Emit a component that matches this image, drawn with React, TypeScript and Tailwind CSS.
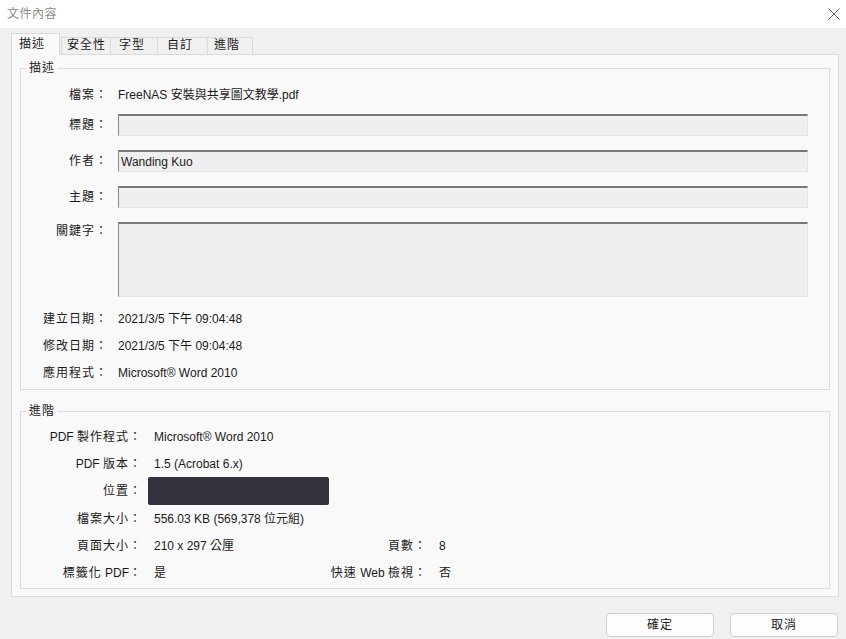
import React from "react";

const font = { fontFamily: '"Liberation Sans", "Noto Sans CJK TC", sans-serif' };

function Field({ label, value, tall }: { label: string; value?: string; tall?: boolean }) {
  return (
    <div className={`flex ${tall ? "items-start h-[75px]" : "items-center h-[22px]"}`}>
      <div className={`w-[87px] text-right tracking-[1px] ${tall ? "pt-[1px]" : ""}`}>{label}</div>
      <div
        className={`ml-[10px] flex-1 mr-[21px] bg-[#efefef] border-t-[2px] border-l border-t-[#7a7a7a] border-l-[#8a8a8a] border-r border-b border-r-[#e4e4e4] border-b-[#e4e4e4] px-[2px] ${
          tall ? "h-[75px]" : "h-[22px] flex items-center"
        }`}
      >
        {value}
      </div>
    </div>
  );
}

function InfoRow({ label, value, w = 87, gap = 10 }: { label: React.ReactNode; value: React.ReactNode; w?: number; gap?: number }) {
  return (
    <div className="flex items-center h-[22px]">
      <div className="text-right tracking-[1px] whitespace-nowrap" style={{ width: w }}>{label}</div>
      <div style={{ marginLeft: gap }}>{value}</div>
    </div>
  );
}

const Lat = ({ children }: { children: React.ReactNode }) => <span className="tracking-normal">{children}</span>;

export default function App() {
  const tabs = [
    { name: "安全性", w: "w-[50px]", pl: "pl-[5px]" },
    { name: "字型", w: "w-[48px]", pl: "pl-[8px]" },
    { name: "自訂", w: "w-[51px]", pl: "pl-[9px]" },
    { name: "進階", w: "w-[46px]", pl: "pl-[6px]" },
  ];

  return (
    <div className="w-[846px] h-[639px] bg-[#f0f0f0] text-[12px] leading-[16px] text-[#1b1b1b] overflow-hidden" style={font}>
      {/* title bar */}
      <div className="h-[28px] bg-white flex items-center justify-between pl-[7px] pr-[4px]">
        <span className="text-[#8c8c8c] tracking-[0.5px]">文件內容</span>
        <svg width="14" height="14" viewBox="0 0 14 14" className="mr-[1px]">
          <path d="M1.5 1.5 L12.5 12.5 M12.5 1.5 L1.5 12.5" stroke="#6a6a6a" strokeWidth="1" />
        </svg>
      </div>

      <div className="pl-[11px] pr-[7px]">
        {/* tabs */}
        <div className="flex items-end h-[26px] pt-[5px]">
          <div className="w-[49px] h-[22px] bg-[#f9f9f9] border border-b-0 border-[#dadada] pl-[7px] pt-[2px] relative z-10 -mb-[1px] tracking-[1px]">
            描述
          </div>
          {tabs.map((t, i) => (
            <div
              key={t.name}
              className={`${t.w} ${t.pl} h-[17px] bg-[#f0f0f0] border border-b-0 border-[#dadada] leading-[15px] tracking-[1px] ${i === 0 ? "ml-[1px]" : "-ml-[1px]"}`}
            >
              {t.name}
            </div>
          ))}
        </div>

        {/* panel */}
        <div className="h-[543px] bg-[#f9f9f9] border border-[#dadada] pt-[13px] px-[8px]">
          {/* 描述 group */}
          <div className="relative border border-[#dcdcdc] pt-[15px] pb-[5px]">
            <span className="absolute left-[5px] -top-[9px] px-[3px] bg-[#f9f9f9] tracking-[1px]">描述</span>
            <InfoRow label="檔案：" value="FreeNAS 安裝與共享圖文教學.pdf" />
            <div className="mt-[8px]">
              <Field label="標題：" />
            </div>
            <div className="mt-[14px]">
              <Field label="作者：" value="Wanding Kuo" />
            </div>
            <div className="mt-[14px]">
              <Field label="主題：" />
            </div>
            <div className="mt-[14px]">
              <Field label="關鍵字：" tall />
            </div>
            <div className="mt-[11px] flex flex-col gap-[5px]">
              <InfoRow label="建立日期：" value="2021/3/5 下午 09:04:48" />
              <InfoRow label="修改日期：" value="2021/3/5 下午 09:04:48" />
              <InfoRow label="應用程式：" value="Microsoft® Word 2010" />
            </div>
          </div>

          {/* 進階 group */}
          <div className="relative mt-[21px] border border-[#dcdcdc] pt-[14px] pb-[4px] flex flex-col gap-[5px]">
            <span className="absolute left-[5px] -top-[9px] px-[3px] bg-[#f9f9f9] tracking-[1px]">進階</span>
            <InfoRow label={<><Lat>PDF </Lat>製作程式：</>} value="Microsoft® Word 2010" w={121} gap={12} />
            <InfoRow label={<><Lat>PDF </Lat>版本：</>} value="1.5 (Acrobat 6.x)" w={121} gap={12} />
            <InfoRow
              label="位置："
              w={121}
              gap={6}
              value={<div className="w-[181px] h-[28px] bg-[#34323c] rounded-[2px] blur-[0.6px]" />}
            />
            <div className="mt-[1px]">
              <InfoRow label="檔案大小：" value="556.03 KB (569,378 位元組)" w={121} gap={12} />
            </div>
            <div className="flex items-center h-[22px]">
              <div className="w-[121px] text-right tracking-[1px]">頁面大小：</div>
              <div className="ml-[12px] w-[172px]">210 x 297 公厘</div>
              <div className="w-[101px] text-right tracking-[1px]">頁數：</div>
              <div className="ml-[12px]">8</div>
            </div>
            <div className="flex items-center h-[22px]">
              <div className="w-[121px] text-right tracking-[1px] whitespace-nowrap">標籤化<Lat> PDF</Lat>：</div>
              <div className="ml-[12px] w-[172px]">是</div>
              <div className="w-[101px] text-right tracking-[1px] whitespace-nowrap">快速<Lat> Web </Lat>檢視：</div>
              <div className="ml-[12px]">否</div>
            </div>
          </div>
        </div>

        {/* buttons */}
        <div className="flex justify-end gap-[16px] mt-[16px] pr-[1px]">
          <button className="w-[108px] h-[24px] rounded-[4px] border border-[#cfcfcf] bg-[#fdfdfd] tracking-[1px]">確定</button>
          <button className="w-[108px] h-[24px] rounded-[4px] border border-[#cfcfcf] bg-[#fdfdfd] tracking-[1px]">取消</button>
        </div>
      </div>
    </div>
  );
}
